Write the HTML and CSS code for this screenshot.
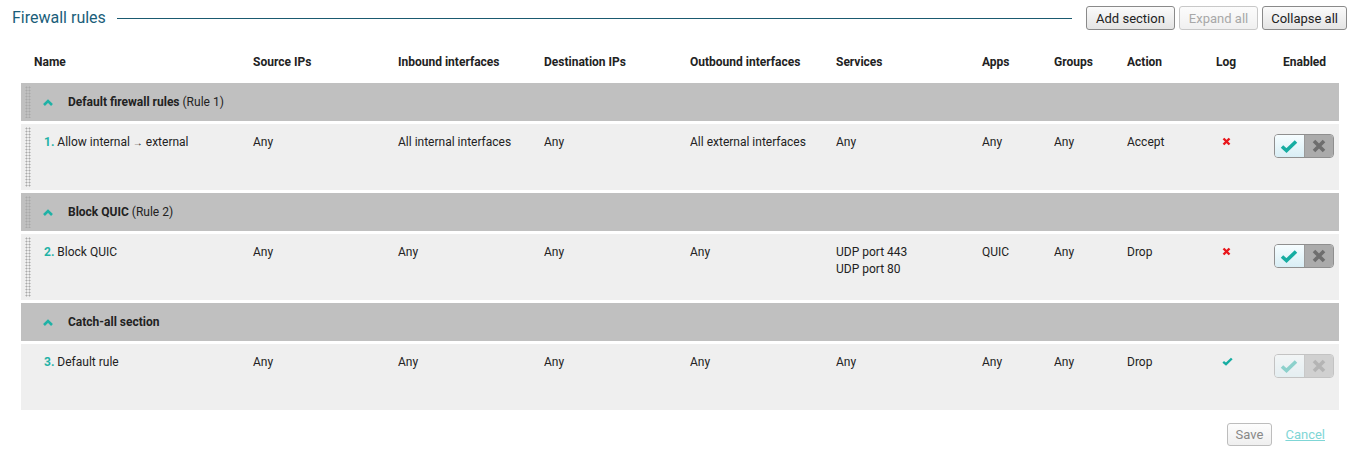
FILE: index.html
```html
<!DOCTYPE html>
<html>
<head>
<meta charset="utf-8">
<link rel="stylesheet" href="styles.css">
</head>
<body>
<div class="topbar">
  <h1 class="title">Firewall rules</h1>
  <div class="rule-line"></div>
  <div class="btns">
    <button class="btn">Add section</button>
    <button class="btn disabled">Expand all</button>
    <button class="btn">Collapse all</button>
  </div>
</div>

<div class="table">
  <div class="row head">
    <div class="c">Name</div>
    <div class="c">Source IPs</div>
    <div class="c">Inbound interfaces</div>
    <div class="c">Destination IPs</div>
    <div class="c">Outbound interfaces</div>
    <div class="c">Services</div>
    <div class="c">Apps</div>
    <div class="c">Groups</div>
    <div class="c">Action</div>
    <div class="c">Log</div>
    <div class="c enabled-h">Enabled</div>
  </div>

  <div class="section">
    <span class="handle"></span>
    <svg class="chev" width="10" height="7" viewBox="0 0 10 7"><polyline points="1,6 5,2 9,6" fill="none" stroke="#1fb2a6" stroke-width="2.6"/></svg>
    <span><b>Default firewall rules</b> (Rule 1)</span>
  </div>
  <div class="row rule">
    <span class="handle"></span>
    <div class="c"><span class="num">1.</span> Allow internal <span class="arrow">→</span> external</div>
    <div class="c">Any</div>
    <div class="c">All internal interfaces</div>
    <div class="c">Any</div>
    <div class="c">All external interfaces</div>
    <div class="c">Any</div>
    <div class="c">Any</div>
    <div class="c">Any</div>
    <div class="c">Accept</div>
    <div class="c log"><svg width="9" height="9" viewBox="0 0 9 9"><path d="M1.5 1.5 L7.5 7.5 M7.5 1.5 L1.5 7.5" stroke="#e8161b" stroke-width="2.4"/></svg></div>
    <div class="c en">
      <div class="toggle">
        <span class="on"><svg width="18" height="14" viewBox="0 0 18 14"><path d="M2 7.5 L6.5 11.5 L16 2.5" fill="none" stroke="#16ada2" stroke-width="3.6"/></svg></span>
        <span class="off"><svg width="14" height="14" viewBox="0 0 14 14"><path d="M2 2 L12 12 M12 2 L2 12" stroke="#6e6e6e" stroke-width="3.6"/></svg></span>
      </div>
    </div>
  </div>

  <div class="section">
    <span class="handle"></span>
    <svg class="chev" width="10" height="7" viewBox="0 0 10 7"><polyline points="1,6 5,2 9,6" fill="none" stroke="#1fb2a6" stroke-width="2.6"/></svg>
    <span><b>Block QUIC</b> (Rule 2)</span>
  </div>
  <div class="row rule">
    <span class="handle"></span>
    <div class="c"><span class="num">2.</span> Block QUIC</div>
    <div class="c">Any</div>
    <div class="c">Any</div>
    <div class="c">Any</div>
    <div class="c">Any</div>
    <div class="c">UDP port 443<br>UDP port 80</div>
    <div class="c">QUIC</div>
    <div class="c">Any</div>
    <div class="c">Drop</div>
    <div class="c log"><svg width="9" height="9" viewBox="0 0 9 9"><path d="M1.5 1.5 L7.5 7.5 M7.5 1.5 L1.5 7.5" stroke="#e8161b" stroke-width="2.4"/></svg></div>
    <div class="c en">
      <div class="toggle">
        <span class="on"><svg width="18" height="14" viewBox="0 0 18 14"><path d="M2 7.5 L6.5 11.5 L16 2.5" fill="none" stroke="#16ada2" stroke-width="3.6"/></svg></span>
        <span class="off"><svg width="14" height="14" viewBox="0 0 14 14"><path d="M2 2 L12 12 M12 2 L2 12" stroke="#6e6e6e" stroke-width="3.6"/></svg></span>
      </div>
    </div>
  </div>

  <div class="section">
    <svg class="chev" width="10" height="7" viewBox="0 0 10 7"><polyline points="1,6 5,2 9,6" fill="none" stroke="#1fb2a6" stroke-width="2.6"/></svg>
    <span><b>Catch-all section</b></span>
  </div>
  <div class="row rule">
    <div class="c"><span class="num">3.</span> Default rule</div>
    <div class="c">Any</div>
    <div class="c">Any</div>
    <div class="c">Any</div>
    <div class="c">Any</div>
    <div class="c">Any</div>
    <div class="c">Any</div>
    <div class="c">Any</div>
    <div class="c">Drop</div>
    <div class="c log"><svg width="11" height="9" viewBox="0 0 11 9"><path d="M1.2 4.8 L4 7.2 L9.8 1.5" fill="none" stroke="#16ada2" stroke-width="2.4"/></svg></div>
    <div class="c en">
      <div class="toggle faded">
        <span class="on"><svg width="18" height="14" viewBox="0 0 18 14"><path d="M2 7.5 L6.5 11.5 L16 2.5" fill="none" stroke="#16ada2" stroke-width="3.6"/></svg></span>
        <span class="off"><svg width="14" height="14" viewBox="0 0 14 14"><path d="M2 2 L12 12 M12 2 L2 12" stroke="#6e6e6e" stroke-width="3.6"/></svg></span>
      </div>
    </div>
  </div>
</div>

<div class="footer">
  <button class="btn save">Save</button>
  <a class="cancel" href="#">Cancel</a>
</div>
</body>
</html>
```
FILE: styles.css
```css
html, body {
  margin: 0;
  padding: 0;
  background: #fff;
  font-family: Roboto, "Liberation Sans", Arial, sans-serif;
  font-size: 12px;
  color: #222;
}

.topbar {
  display: flex;
  align-items: center;
  height: 24px;
  margin-top: 6px;
  padding-left: 12px;
  padding-right: 5px;
}
.title {
  margin: 0;
  font-size: 16px;
  font-weight: 400;
  color: #1a5e7a;
  line-height: 20px;
  margin-top: -1px;
}
.rule-line {
  flex: 1;
  height: 1px;
  background: #1a5a70;
  margin: 0 14px 0 11px;
}
.btns {
  display: flex;
  gap: 4px;
}
.btn {
  font-family: Roboto, "Liberation Sans", Arial, sans-serif;
  font-size: 13px;
  color: #222;
  height: 24px;
  padding: 0 9px;
  border: 1px solid #8a8a8a;
  border-radius: 3px;
  background: linear-gradient(#fbfbfb, #e4e4e4);
  box-sizing: border-box;
}
.btns .btn:last-child {
  padding: 0 8px;
}
.btn.disabled {
  color: #a8a8a8;
  border-color: #c8c8c8;
  background: linear-gradient(#fcfcfc, #f0f0f0);
}

.table {
  margin: 13px 0 0 21px;
  width: 1318px;
}
.row {
  display: grid;
  grid-template-columns: 219px 145px 146px 146px 146px 146px 72px 73px 89px 59px 77px;
  position: relative;
}
.c {
  padding-left: 13px;
  line-height: 17px;
}
.head {
  height: 40px;
  padding-bottom: 2px;
  box-sizing: border-box;
  align-items: center;
  font-weight: 700;
}
.head .enabled-h {
  padding-left: 21px;
}

.section {
  position: relative;
  display: flex;
  align-items: center;
  height: 38px;
  background: #c0c0c0;
  margin-bottom: 3px;
  padding-left: 22px;
  box-sizing: border-box;
}
.section .chev {
  margin-right: 14px;
  margin-top: 1px;
}
.section > span:last-child {
  margin-left: 1px;
}
.section b {
  font-weight: 700;
}

.rule {
  height: 66px;
  background: #efefef;
  margin-bottom: 3px;
  padding-top: 10px;
  box-sizing: border-box;
  align-items: start;
}
.rule .c:first-of-type {
  padding-left: 23px;
}
.num {
  color: #1fb2a6;
  font-weight: 700;
}
.arrow {
  font-size: 10px;
}

.handle {
  position: absolute;
  left: 4px;
  top: 3px;
  bottom: 3px;
  width: 6px;
  background-image: radial-gradient(circle, #a9a9a9 0.9px, transparent 1.1px);
  background-size: 3px 3px;
}

.log {
  padding-left: 19px;
  padding-top: 0;
}
.en {
  padding-left: 12px;
  padding-top: 0;
}
.toggle {
  display: flex;
  width: 60px;
  height: 24px;
  border: 1px solid #8f8f8f;
  border-radius: 4px;
  overflow: hidden;
  box-sizing: border-box;
}
.toggle .on, .toggle .off {
  flex: 1;
  display: flex;
  align-items: center;
  justify-content: center;
}
.toggle .on {
  background: linear-gradient(#f6fdff, #d9eef5);
  border-right: 1px solid #9a9a9a;
}
.toggle .off {
  background: #ababab;
}
.toggle.faded {
  opacity: 0.45;
}

.footer {
  display: flex;
  justify-content: flex-end;
  align-items: center;
  gap: 13px;
  margin-top: 13px;
  padding-right: 27px;
}
.btn.save {
  color: #888;
  border-color: #bdbdbd;
  background: linear-gradient(#fdfdfd, #efefef);
  padding: 0 8px;
  height: 23px;
}
.cancel {
  font-size: 13px;
  color: #7fd6d6;
  text-decoration: underline;
}
```
